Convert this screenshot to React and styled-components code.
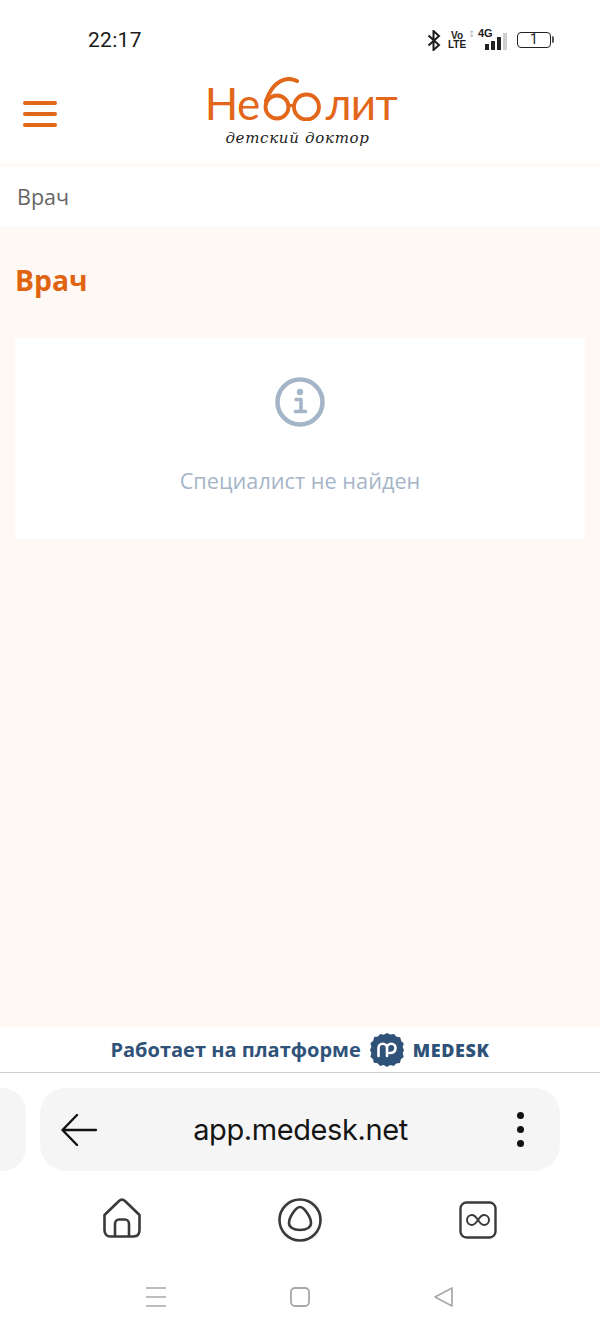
import React from 'react'
import styled, { createGlobalStyle } from 'styled-components'

const GlobalStyle = createGlobalStyle`
    html, body {
        margin: 0;
        padding: 0;
        background: #fff;
    }
    * {
        box-sizing: border-box;
    }
`

// STYLING
const Screen = styled.div`
    width: 600px;
    height: 1332px;
    display: flex;
    flex-direction: column;
    overflow: hidden;
    padding-bottom: 24px;
    background: #fff;
    font-family: "Open Sans", "Liberation Sans", sans-serif;
`
const StatusBar = styled.div`
    height: 65px;
    flex: none;
    display: flex;
    justify-content: space-between;
    align-items: center;
    padding: 15px 46px 0 88px;
`
const Time = styled.span`
    font-family: Roboto, sans-serif;
    font-size: 21px;
    font-weight: 400;
    letter-spacing: .3px;
    color: #1b1b1b;
`
const StatusIcons = styled.div`
    display: flex;
    align-items: center;
    gap: 9px;
    color: #1c1c1c;
`
const VoLte = styled.span`
    display: flex;
    flex-direction: column;
    align-items: center;
    font-family: "Liberation Sans", sans-serif;
    font-weight: 700;
    font-size: 10px;
    line-height: 9px;
    width: 14px;
`
const Signal = styled.div`
    position: relative;
    width: 34px;
    height: 20px;
    display: flex;
    align-items: flex-end;
    justify-content: flex-end;
    gap: 2px;
`
const SignalLabel = styled.span`
    position: absolute;
    top: -3px;
    left: 5px;
    font-family: "Liberation Sans", sans-serif;
    font-weight: 700;
    font-size: 11px;
    line-height: 12px;
`
const SignalArrows = styled.span`
    position: absolute;
    top: -2px;
    left: -5px;
    font-family: "DejaVu Sans", sans-serif;
    font-size: 9px;
    line-height: 12px;
    color: #bbb;
`
const SignalBar = styled.i`
    display: block;
    width: 4px;
    height: ${p => p.$h}px;
    background: ${p => (p.$off ? '#cfcfcf' : '#222')};
`
const Battery = styled.div`
    position: relative;
    width: 34px;
    height: 16px;
    margin-left: 1px;
    margin-right: 3px;
    border: 1.5px solid #222;
    border-radius: 4px;
    font-family: Roboto, sans-serif;
    font-size: 14px;
    line-height: 13px;
    text-align: center;

    &::after {
        content: "";
        position: absolute;
        right: -4px;
        top: 3px;
        width: 2px;
        height: 7px;
        background: #555;
        border-radius: 0 2px 2px 0;
    }
`
const Header = styled.header`
    height: 102px;
    flex: none;
    display: flex;
    align-items: center;
    padding: 0 0 8px 23px;
    border-bottom: 4px solid #fdfaf7;
`
const Burger = styled.div`
    width: 34px;
    display: flex;
    flex-direction: column;
    gap: 6.5px;
    margin-top: 8px;

    i {
        display: block;
        height: 4.5px;
        border-radius: 2px;
        background: #e2671b;
    }
`
const Logo = styled.div`
    margin: 5px 0 0 147px;
    width: 194px;
    display: flex;
    flex-direction: column;
    align-items: center;
`
const LogoWord = styled.div`
    display: flex;
    align-items: flex-end;
    height: 42px;
    font-family: Lato, "Open Sans", sans-serif;
    font-size: 44px;
    line-height: 42px;
    letter-spacing: -.6px;
    color: #e2671b;
`
const LogoLetters = styled.span`
    display: block;
    transform: translateY(3px);
`
const GlassesSvg = styled.svg`
    margin: 0 2px;
`
const LogoTagline = styled.span`
    font-family: "DejaVu Serif", "Liberation Serif", serif;
    font-style: italic;
    font-size: 15px;
    line-height: 16px;
    letter-spacing: .7px;
    color: #222;
    margin: 9px 7px 0 0;
`
const Breadcrumbs = styled.div`
    height: 59px;
    flex: none;
    display: flex;
    align-items: center;
    padding-left: 17px;
    font-size: 21.5px;
    color: #666;
`
const Main = styled.main`
    flex: 1;
    background: #fff9f5;
    padding: 32px 15px 0;
`
const Title = styled.h1`
    margin: 0 0 36px;
    font-size: 28.300px;
    line-height: 44px;
    font-weight: 700;
    color: #e0640f;
`
const EmptyCard = styled.div`
    height: 201px;
    background: #fff;
    display: flex;
    flex-direction: column;
    align-items: center;
    padding-top: 39px;
    gap: 39px;
`
const EmptyText = styled.div`
    font-size: 21.700px;
    line-height: 30px;
    color: #a5b5c8;
`
const Footer = styled.div`
    height: 46px;
    flex: none;
    display: flex;
    align-items: center;
    justify-content: center;
    gap: 9px;
    border-bottom: 1.5px solid #cfcfcf;
    font-size: 20px;
    font-weight: 700;
    color: #2f5279;
`
const MedeskName = styled.span`
    font-size: 18px;
    font-weight: 800;
    letter-spacing: .6px;
`
const BrowserBar = styled.div`
    height: 83px;
    flex: none;
    margin-top: 15px;
    display: flex;
    gap: 14px;
`
const TabStub = styled.div`
    width: 26px;
    background: #f5f5f5;
    border-radius: 0 24px 24px 0;
`
const AddressBar = styled.div`
    width: 520px;
    background: #f5f5f5;
    border-radius: 26px;
    display: flex;
    align-items: center;
    justify-content: space-between;
    padding: 0 36px 0 21px;
`
const Url = styled.span`
    font-family: Inter, Roboto, sans-serif;
    font-size: 29px;
    letter-spacing: -.4px;
    color: #151515;
    margin-right: 13px;
`
const Dots = styled.div`
    display: flex;
    flex-direction: column;
    gap: 7px;

    i {
        display: block;
        width: 7px;
        height: 7px;
        border-radius: 50%;
        background: #111;
    }
`
const BottomNav = styled.div`
    flex: none;
    height: 44px;
    margin-top: 27px;
    display: flex;
    align-items: flex-start;
    padding-left: 103px;
    gap: 137px;
`
const TabsSvg = styled.svg`
    margin-top: 3px;
`
const SystemNav = styled.div`
    flex: none;
    height: 22px;
    margin-top: 44px;
    display: flex;
    align-items: center;
    padding-left: 145px;
    gap: 122px;
`

const Bluetooth = () => (
    <svg width="14" height="21" viewBox="0 0 14 21" fill="none" stroke="#1c1c1c" strokeWidth="2">
        <path d="M1.5 5.5 12 15l-5.5 5V1L12 6 1.5 15.5" />
    </svg>
)

// the spectacles in the middle of the logo
const Glasses = () => (
    <GlassesSvg width="62" height="44" viewBox="0 0 62 44" fill="none" stroke="#e2671b" strokeLinecap="round">
        <path strokeWidth="4" d="M35 4C25 -1 11 3 4 24" />
        <circle cx="15" cy="30" r="11.500" strokeWidth="3.800" />
        <path strokeWidth="3" d="M26.500 29c2-1 3-1 5 0" />
        <circle cx="44.500" cy="30" r="12.500" strokeWidth="3.800" />
    </GlassesSvg>
)

const InfoIcon = () => (
    <svg width="50" height="50" viewBox="0 0 50 50" fill="none">
        <circle cx="25" cy="25" r="22.5" stroke="#a5b5c8" strokeWidth="4.5" />
        <circle cx="25" cy="15" r="3.2" fill="#a5b5c8" />
        <path d="M21 22.500h5v12M20.500 34.500h10" stroke="#a5b5c8" strokeWidth="3.600" strokeLinecap="round" strokeLinejoin="round" />
    </svg>
)

const MedeskBadge = () => (
    <svg width="34" height="34" viewBox="0 0 34 34">
        <path fill="#2f5279" d="M17 0l3.400 1.600L24 .9l2.500 2.800 3.700.6 1 3.600 2.500 2.700-1 3.600L34 17l-1.300 3.300 1 3.600-2.800 2.400-1 3.600-3.700.5L23.700 33 20.200 32 17 34l-3.300-1.900-3.600.9-2.500-2.700-3.700-.6-1-3.600L.4 23.700l1-3.500L0 17l1.400-3.300-1-3.500 2.800-2.500 1-3.600 3.700-.6L10.300.9l3.400.8z" />
        <path fill="none" stroke="#fff" strokeWidth="2.600" strokeLinecap="round" d="M8.500 23v-8a4.250 4.250 0 0 1 8.500 0v8M17 15a4.250 4.250 0 0 1 8.500 0c0 4-3 5-6 5" />
    </svg>
)

const BackArrow = () => (
    <svg width="36" height="32" viewBox="0 0 36 32" fill="none" stroke="#111" strokeWidth="2.400" strokeLinecap="round" strokeLinejoin="round">
        <path d="M35 16H2M16 1 1.500 16 16 31" />
    </svg>
)

const HomeIcon = () => (
    <svg width="38" height="40" viewBox="0 0 38 40" fill="none" stroke="#3a3a3a" strokeWidth="2.600" strokeLinejoin="round">
        <path d="M1.500 17 16 3c2-2 4-2 6 0l14.500 14v15c0 4-2 6.500-6 6.500h-23c-4 0-6-2.500-6-6.500z" />
        <path d="M12 38V26c0-3 2-4.500 4-4.500h6c2 0 4 1.500 4 4.500v12" />
    </svg>
)

const AliceIcon = () => (
    <svg width="44" height="44" viewBox="0 0 44 44" fill="none" stroke="#3a3a3a" strokeWidth="2.600">
        <circle cx="22" cy="22" r="20.500" />
        <path strokeLinejoin="round" d="M22 9c4 0 11 10 11 16 0 4-4 7-11 7s-11-3-11-7c0-6 7-16 11-16z" />
    </svg>
)

const TabsIcon = () => (
    <TabsSvg width="38" height="38" viewBox="0 0 38 38" fill="none" stroke="#3a3a3a" strokeWidth="2.400">
        <rect x="1.500" y="1.500" width="35" height="35" rx="6" />
        <path d="M19 19c-2-3-3.500-5-6-5a5 5 0 0 0 0 10c2.500 0 4-2 6-5s3.500-5 6-5a5 5 0 0 1 0 10c-2.500 0-4-2-6-5z" strokeWidth="2" />
    </TabsSvg>
)

const SysMenu = () => (
    <svg width="22" height="22" viewBox="0 0 22 22" stroke="#a8a8a8" strokeWidth="1.600">
        <path d="M1 2h20M1 11h20M1 20h20" />
    </svg>
)

const SysHome = () => (
    <svg width="22" height="22" viewBox="0 0 22 22" fill="none" stroke="#a8a8a8" strokeWidth="1.800">
        <rect x="2" y="2" width="18" height="18" rx="4" />
    </svg>
)

const SysBack = () => (
    <svg width="22" height="22" viewBox="0 0 22 22" fill="none" stroke="#a8a8a8" strokeWidth="1.700" strokeLinejoin="round">
        <path d="M19 2v18L2 11z" />
    </svg>
)

const App = () => {
    return (
        <Screen>
            <GlobalStyle />
            <StatusBar>
                <Time>22:17</Time>
                <StatusIcons>
                    <Bluetooth />
                    <VoLte><span>Vo</span><span>LTE</span></VoLte>
                    <Signal>
                        <SignalArrows>↕</SignalArrows>
                        <SignalLabel>4G</SignalLabel>
                        <SignalBar $h={6} />
                        <SignalBar $h={9} />
                        <SignalBar $h={13} />
                        <SignalBar $h={17} $off />
                    </Signal>
                    <Battery>1</Battery>
                </StatusIcons>
            </StatusBar>
            <Header>
                <Burger><i /><i /><i /></Burger>
                <Logo>
                    <LogoWord>
                        <LogoLetters>Не</LogoLetters>
                        <Glasses />
                        <LogoLetters>лит</LogoLetters>
                    </LogoWord>
                    <LogoTagline>детский доктор</LogoTagline>
                </Logo>
            </Header>
            <Breadcrumbs>Врач</Breadcrumbs>
            <Main>
                <Title>Врач</Title>
                <EmptyCard>
                    <InfoIcon />
                    <EmptyText>Специалист не найден</EmptyText>
                </EmptyCard>
            </Main>
            <Footer>
                <span>Работает на платформе</span>
                <MedeskBadge />
                <MedeskName>MEDESK</MedeskName>
            </Footer>
            <BrowserBar>
                <TabStub />
                <AddressBar>
                    <BackArrow />
                    <Url>app.medesk.net</Url>
                    <Dots><i /><i /><i /></Dots>
                </AddressBar>
            </BrowserBar>
            <BottomNav>
                <HomeIcon />
                <AliceIcon />
                <TabsIcon />
            </BottomNav>
            <SystemNav>
                <SysMenu />
                <SysHome />
                <SysBack />
            </SystemNav>
        </Screen>
    );
};

export default App;
